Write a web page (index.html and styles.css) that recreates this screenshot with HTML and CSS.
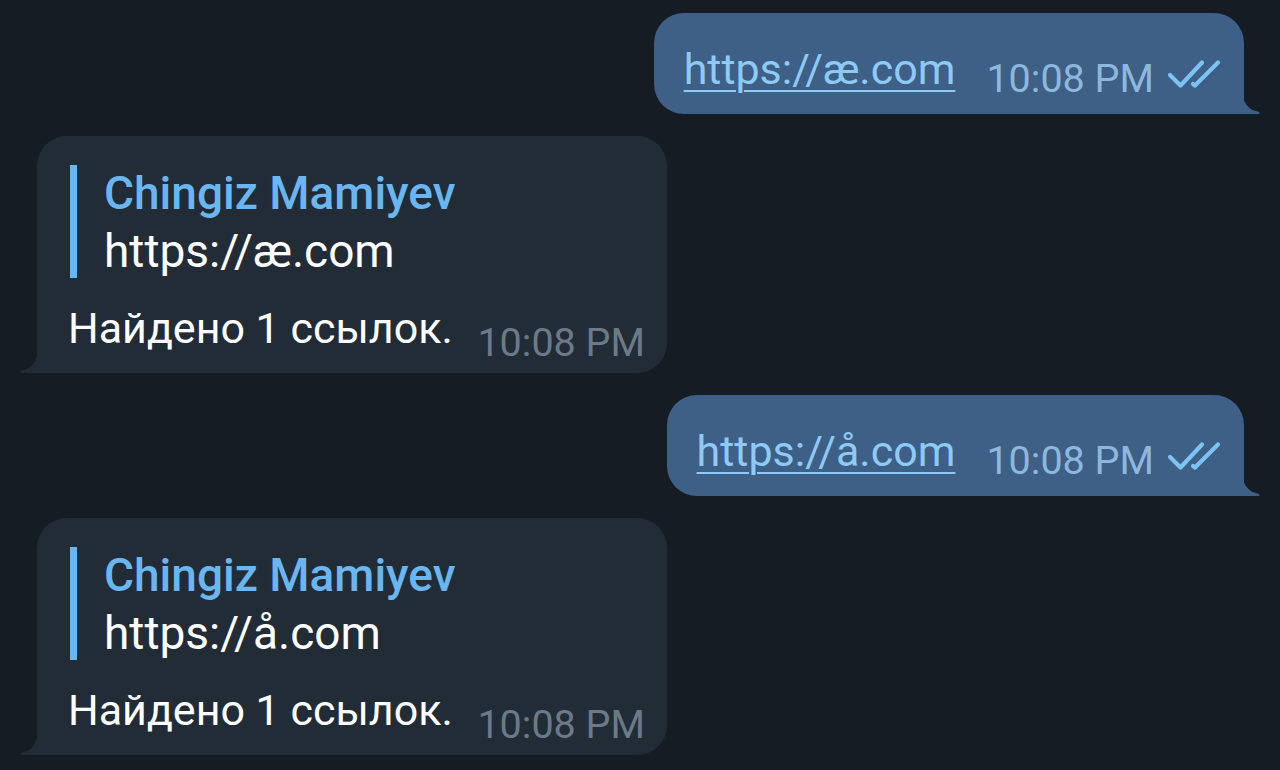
FILE: index.html
```html
<!DOCTYPE html>
<html lang="ru">
<head>
<meta charset="utf-8">
<title>Chat</title>
<link rel="stylesheet" href="styles.css">
</head>
<body>
<div class="chat">
  <div class="msg out">
    <div class="bubble">
      <div class="row">
        <a class="link" href="#">https://æ.com</a>
        <span class="meta"><span class="time">10:08 PM</span>
          <svg class="checks" width="56" height="32" viewBox="0 0 56 32"><path d="M3 16 L13.5 26.5 L35 3.5 M26 25 L28 26.5 L51 3.5" fill="none" stroke="#7cc3f3" stroke-width="4.2" stroke-linecap="round" stroke-linejoin="round"/></svg>
        </span>
      </div>
      <svg class="tail" width="18" height="26" viewBox="0 0 18 26"><path d="M0 0 C0 14 6 22 16 23.5 C18 24 18 26 16 26 L0 26 Z" fill="#3e5f86"/></svg>
    </div>
  </div>

  <div class="msg in">
    <div class="bubble">
      <div class="quote">
        <div class="name">Chingiz Mamiyev</div>
        <div class="qtext">https://æ.com</div>
      </div>
      <div class="row">
        <span class="text">Найдено 1 ссылок.</span>
        <span class="meta"><span class="time">10:08 PM</span></span>
      </div>
      <svg class="tail" width="18" height="26" viewBox="0 0 18 26"><path d="M18 0 C18 14 12 22 2 23.5 C0 24 0 26 2 26 L18 26 Z" fill="#222c37"/></svg>
    </div>
  </div>

  <div class="msg out">
    <div class="bubble">
      <div class="row">
        <a class="link" href="#">https://å.com</a>
        <span class="meta"><span class="time">10:08 PM</span>
          <svg class="checks" width="56" height="32" viewBox="0 0 56 32"><path d="M3 16 L13.5 26.5 L35 3.5 M26 25 L28 26.5 L51 3.5" fill="none" stroke="#7cc3f3" stroke-width="4.2" stroke-linecap="round" stroke-linejoin="round"/></svg>
        </span>
      </div>
      <svg class="tail" width="18" height="26" viewBox="0 0 18 26"><path d="M0 0 C0 14 6 22 16 23.5 C18 24 18 26 16 26 L0 26 Z" fill="#3e5f86"/></svg>
    </div>
  </div>

  <div class="msg in">
    <div class="bubble">
      <div class="quote">
        <div class="name">Chingiz Mamiyev</div>
        <div class="qtext">https://å.com</div>
      </div>
      <div class="row">
        <span class="text">Найдено 1 ссылок.</span>
        <span class="meta"><span class="time">10:08 PM</span></span>
      </div>
      <svg class="tail" width="18" height="26" viewBox="0 0 18 26"><path d="M18 0 C18 14 12 22 2 23.5 C0 24 0 26 2 26 L18 26 Z" fill="#222c37"/></svg>
    </div>
  </div>
</div>
</body>
</html>
```

FILE: styles.css
```css
html, body {
  margin: 0;
  padding: 0;
  background: #161c24;
  width: 1280px;
  height: 770px;
  overflow: hidden;
  font-family: Roboto, "Liberation Sans", sans-serif;
}

.chat {
  display: flex;
  flex-direction: column;
  gap: 22px;
  padding: 13px 36px 0 37px;
}

.msg {
  display: flex;
}

.msg.out {
  justify-content: flex-end;
}

.msg.in {
  justify-content: flex-start;
}

.bubble {
  position: relative;
  box-sizing: border-box;
}

.out .bubble {
  background: #3e5f86;
  border-radius: 30px 30px 0 30px;
  height: 101px;
  padding: 31px 21px 0 30px;
}

.in .bubble {
  background: #222c37;
  border-radius: 30px 30px 30px 0;
  width: 630px;
  height: 237px;
  padding: 29px 22px 0 31px;
}

.tail {
  position: absolute;
  bottom: 0;
}

.out .tail {
  right: -16px;
}

.in .tail {
  left: -17px;
}

.row {
  display: flex;
  align-items: flex-end;
}

.link {
  color: #8ecaf6;
  font-size: 43px;
  line-height: 50px;
  text-decoration: underline;
  text-decoration-thickness: 2px;
  text-underline-offset: 6px;
  margin-bottom: 8px;
}

.meta {
  display: flex;
  align-items: center;
  margin-left: 31px;
}

.in .meta {
  margin-left: auto;
}

.time {
  font-size: 39.5px;
  line-height: 46px;
}

.out .time {
  color: #8db8dc;
}

.in .time {
  color: #6b7a89;
}

.checks {
  margin-left: 13px;
  margin-top: -8px;
}

.quote {
  border-left: 7px solid #6ab6f0;
  margin-left: 2px;
  padding-left: 27px;
  margin-bottom: 25px;
}

.name {
  color: #6ab6f0;
  font-weight: 500;
  font-size: 46px;
  line-height: 50px;
  padding-top: 3px;
}

.qtext {
  color: #ffffff;
  font-size: 46px;
  line-height: 54px;
  padding-top: 6px;
}

.text {
  color: #ffffff;
  font-size: 43px;
  line-height: 50px;
  margin-bottom: 13px;
}
```
